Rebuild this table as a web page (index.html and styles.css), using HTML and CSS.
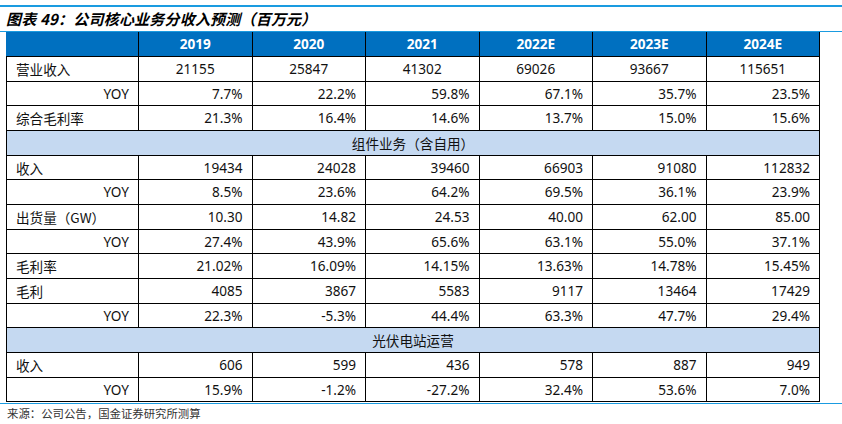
FILE: index.html
```html
<!DOCTYPE html>
<html lang="zh-CN">
<head>
<meta charset="utf-8">
<title>图表 49</title>
<link rel="stylesheet" href="styles.css">
</head>
<body>
<div class="page">
  <div class="rule-top"></div>
  <div class="title">图表 49：公司核心业务分收入预测（百万元）</div>
  <div class="rule"></div>
  <table class="data">
    <colgroup>
      <col class="c-label">
      <col class="c-num"><col class="c-num"><col class="c-num">
      <col class="c-num"><col class="c-num"><col class="c-num">
    </colgroup>
    <thead>
      <tr class="head">
        <th></th><th>2019</th><th>2020</th><th>2021</th><th>2022E</th><th>2023E</th><th>2024E</th>
      </tr>
    </thead>
    <tbody>
      <tr class="center">
        <td class="label">营业收入</td><td>21155</td><td>25847</td><td>41302</td><td>69026</td><td>93667</td><td>115651</td>
      </tr>
      <tr>
        <td class="label yoy">YOY</td><td>7.7%</td><td>22.2%</td><td>59.8%</td><td>67.1%</td><td>35.7%</td><td>23.5%</td>
      </tr>
      <tr>
        <td class="label">综合毛利率</td><td>21.3%</td><td>16.4%</td><td>14.6%</td><td>13.7%</td><td>15.0%</td><td>15.6%</td>
      </tr>
      <tr class="section">
        <td colspan="7">组件业务（含自用）</td>
      </tr>
      <tr>
        <td class="label">收入</td><td>19434</td><td>24028</td><td>39460</td><td>66903</td><td>91080</td><td>112832</td>
      </tr>
      <tr>
        <td class="label yoy">YOY</td><td>8.5%</td><td>23.6%</td><td>64.2%</td><td>69.5%</td><td>36.1%</td><td>23.9%</td>
      </tr>
      <tr>
        <td class="label">出货量（GW）</td><td>10.30</td><td>14.82</td><td>24.53</td><td>40.00</td><td>62.00</td><td>85.00</td>
      </tr>
      <tr>
        <td class="label yoy">YOY</td><td>27.4%</td><td>43.9%</td><td>65.6%</td><td>63.1%</td><td>55.0%</td><td>37.1%</td>
      </tr>
      <tr>
        <td class="label">毛利率</td><td>21.02%</td><td>16.09%</td><td>14.15%</td><td>13.63%</td><td>14.78%</td><td>15.45%</td>
      </tr>
      <tr>
        <td class="label">毛利</td><td>4085</td><td>3867</td><td>5583</td><td>9117</td><td>13464</td><td>17429</td>
      </tr>
      <tr>
        <td class="label yoy">YOY</td><td>22.3%</td><td>-5.3%</td><td>44.4%</td><td>63.3%</td><td>47.7%</td><td>29.4%</td>
      </tr>
      <tr class="section">
        <td colspan="7">光伏电站运营</td>
      </tr>
      <tr>
        <td class="label">收入</td><td>606</td><td>599</td><td>436</td><td>578</td><td>887</td><td>949</td>
      </tr>
      <tr>
        <td class="label yoy">YOY</td><td>15.9%</td><td>-1.2%</td><td>-27.2%</td><td>32.4%</td><td>53.6%</td><td>7.0%</td>
      </tr>
    </tbody>
  </table>
  <div class="rule rule-bottom"></div>
  <div class="source">来源：公司公告，国金证券研究所测算</div>
</div>
</body>
</html>
```

FILE: styles.css
```css
html, body {
  margin: 0;
  padding: 0;
  background: #ffffff;
}

.page {
  width: 842px;
  height: 424px;
  overflow: hidden;
  font-family: "Noto Sans", "Noto Sans CJK SC", sans-serif;
  color: #111111;
}

.rule-top {
  margin-top: 5px;
  height: 2px;
  background: #1a9be0;
}

.title {
  height: 24px;
  line-height: 24px;
  padding-left: 6px;
  font-family: "Noto Sans CJK SC", sans-serif;
  font-size: 15px;
  font-weight: 700;
  font-style: italic;
  color: #000000;
  letter-spacing: 0.2px;
}

.rule {
  height: 1px;
  background: #1a9be0;
}

.data {
  margin-left: 6px;
  width: 813px;
  border-collapse: collapse;
  table-layout: fixed;
  font-size: 13.6px;
}

.c-label { width: 132px; }
.c-num { width: 113.5px; }

.data tr {
  height: 24.67px;
}

.data th,
.data td {
  padding: 0 9px 0 9px;
  border: 1px solid #000000;
  line-height: 18px;
  white-space: nowrap;
  text-align: right;
  vertical-align: middle;
}

.data .head th {
  background: #0070c0;
  color: #ffffff;
  font-weight: 700;
  text-align: center;
  border-top: 0;
}

.data .head th:first-child {
  border-left-color: #0070c0;
}

.data .label {
  text-align: left;
  font-family: "Noto Sans CJK SC", sans-serif;
}

.data .label.yoy {
  text-align: right;
  font-family: "Noto Sans", sans-serif;
}

.data .center td {
  text-align: center;
}

.data .center td.label {
  text-align: left;
}

.data .section td {
  background: #c5d9f1;
  text-align: center;
  font-family: "Noto Sans CJK SC", sans-serif;
}

.rule-bottom {
  margin-top: 1px;
  height: 1px;
}

.source {
  padding-left: 7px;
  height: 18px;
  line-height: 18px;
  font-family: "Noto Sans CJK SC", sans-serif;
  font-size: 11.4px;
  color: #333333;
}
```
